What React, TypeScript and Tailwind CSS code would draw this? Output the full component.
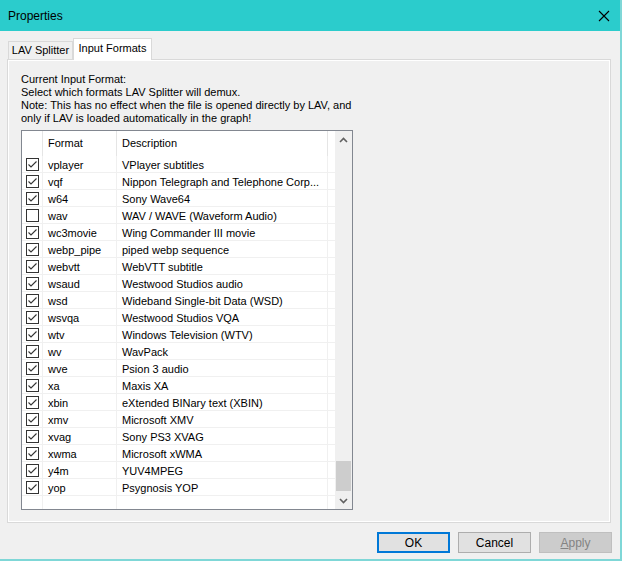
import { useState } from "react";

const rows: [string, string, boolean][] = [
  ["vplayer", "VPlayer subtitles", true],
  ["vqf", "Nippon Telegraph and Telephone Corp...", true],
  ["w64", "Sony Wave64", true],
  ["wav", "WAV / WAVE (Waveform Audio)", false],
  ["wc3movie", "Wing Commander III movie", true],
  ["webp_pipe", "piped webp sequence", true],
  ["webvtt", "WebVTT subtitle", true],
  ["wsaud", "Westwood Studios audio", true],
  ["wsd", "Wideband Single-bit Data (WSD)", true],
  ["wsvqa", "Westwood Studios VQA", true],
  ["wtv", "Windows Television (WTV)", true],
  ["wv", "WavPack", true],
  ["wve", "Psion 3 audio", true],
  ["xa", "Maxis XA", true],
  ["xbin", "eXtended BINary text (XBIN)", true],
  ["xmv", "Microsoft XMV", true],
  ["xvag", "Sony PS3 XVAG", true],
  ["xwma", "Microsoft xWMA", true],
  ["y4m", "YUV4MPEG", true],
  ["yop", "Psygnosis YOP", true],
];

function Check({ on, onClick }: { on: boolean; onClick: () => void }) {
  return (
    <button onClick={onClick} className="flex h-[13px] w-[13px] items-center justify-center border border-[#333] bg-white">
      {on && (
        <svg width="11" height="11" viewBox="0 0 11 11">
          <path d="M1.5 5.5 L4 8 L9.5 2.5" fill="none" stroke="#333" strokeWidth="1.1" />
        </svg>
      )}
    </button>
  );
}

export default function App() {
  const [checked, setChecked] = useState(rows.map((r) => r[2]));

  return (
    <div
      className="flex h-[561px] w-[622px] flex-col border-r-2 border-b-2 border-[#7fd7d7] bg-[#f0f0f0] text-[11px] text-black"
      style={{ fontFamily: '"Liberation Sans", Arial, sans-serif' }}
    >
      {/* title bar */}
      <div className="flex h-[31px] shrink-0 items-center justify-between bg-[#2bcccc] pl-[8px] pr-[10px]">
        <span className="text-[12px]">Properties</span>
        <svg width="12" height="12" viewBox="0 0 12 12">
          <path d="M1 1 L11 11 M11 1 L1 11" stroke="#000" strokeWidth="1.1" />
        </svg>
      </div>

      {/* tabs */}
      <div className="mt-[7px] flex h-[21px] items-end pl-[8px]">
        <div className="flex h-[18px] w-[65px] items-center justify-center whitespace-nowrap border border-b-0 border-[#d9d9d9] bg-[#f0f0f0] leading-none">
          LAV Splitter
        </div>
        <div className="relative z-10 -mb-px flex h-[22px] w-[79px] items-center justify-center whitespace-nowrap border border-b-0 border-[#d9d9d9] bg-white pb-[3px] leading-none">
          Input Formats
        </div>
      </div>

      {/* panel */}
      <div className="ml-[7px] h-[464px] w-[604px] border border-[#d9d9d9] bg-white p-px">
        <div className="h-full bg-[#f0f0f0] pl-[12px] pt-[12px]">
          <div className="leading-[13px]">
            <p className="h-[13px] whitespace-nowrap">Current Input Format:</p>
            <p className="h-[13px] whitespace-nowrap">Select which formats LAV Splitter will demux.</p>
            <p className="h-[13px] whitespace-nowrap">Note: This has no effect when the file is opened directly by LAV, and</p>
            <p className="h-[13px] whitespace-nowrap">only if LAV is loaded automatically in the graph!</p>
          </div>

          {/* list view */}
          <div className="mt-[5px] flex h-[380px] w-[332px] border border-[#828790] bg-white">
            <div className="flex min-w-0 flex-1 flex-col">
              <div className="flex h-[25px] shrink-0">
                <div className="w-[21px] border-r border-[#e5e5e5]" />
                <div className="flex w-[74px] items-center border-r border-[#e5e5e5] pl-[5px]">Format</div>
                <div className="flex w-[211px] items-center border-r border-[#e5e5e5] pl-[5px]">Description</div>
                <div className="flex-1" />
              </div>
              {rows.map(([fmt, desc], i) => (
                <div key={fmt} className="flex h-[17px] shrink-0 border-b border-[#f0f0f0]">
                  <div className="flex w-[21px] items-center justify-center border-r border-[#f0f0f0] pl-px">
                    <Check
                      on={checked[i]}
                      onClick={() => setChecked((c) => c.map((v, j) => (j === i ? !v : v)))}
                    />
                  </div>
                  <div className="w-[74px] whitespace-nowrap border-r border-[#f0f0f0] pl-[5px] leading-[18px]">{fmt}</div>
                  <div className="w-[211px] overflow-hidden whitespace-nowrap border-r border-[#f0f0f0] pl-[5px] leading-[18px]">
                    {desc}
                  </div>
                  <div className="flex-1" />
                </div>
              ))}
              <div className="flex flex-1">
                <div className="w-[21px] border-r border-[#f0f0f0]" />
                <div className="w-[74px] border-r border-[#f0f0f0]" />
                <div className="w-[211px] border-r border-[#f0f0f0]" />
              </div>
            </div>

            {/* scrollbar */}
            <div className="flex w-[17px] shrink-0 flex-col bg-[#f0f0f0]">
              <div className="flex h-[17px] items-center justify-center">
                <svg width="9" height="6" viewBox="0 0 9 6">
                  <path d="M1 5 L4.5 1.5 L8 5" fill="none" stroke="#606060" strokeWidth="1.6" />
                </svg>
              </div>
              <div className="flex-1 px-px pt-[313px]">
                <div className="h-[30px] bg-[#cdcdcd]" />
              </div>
              <div className="flex h-[17px] items-center justify-center">
                <svg width="9" height="6" viewBox="0 0 9 6">
                  <path d="M1 1 L4.5 4.5 L8 1" fill="none" stroke="#606060" strokeWidth="1.6" />
                </svg>
              </div>
            </div>
          </div>
        </div>
      </div>

      {/* buttons */}
      <div className="mt-[9px] flex justify-end gap-[8px] pr-[8px] text-[12px]">
        <button className="h-[21px] w-[73px] border-2 border-[#0078d7] bg-[#e1e1e1] leading-none">OK</button>
        <button className="h-[21px] w-[73px] border border-[#adadad] bg-[#e1e1e1] leading-none">Cancel</button>
        <button disabled className="h-[21px] w-[73px] border border-[#bfbfbf] bg-[#cccccc] leading-none text-[#838383]">
          <span className="underline">A</span>pply
        </button>
      </div>
    </div>
  );
}
